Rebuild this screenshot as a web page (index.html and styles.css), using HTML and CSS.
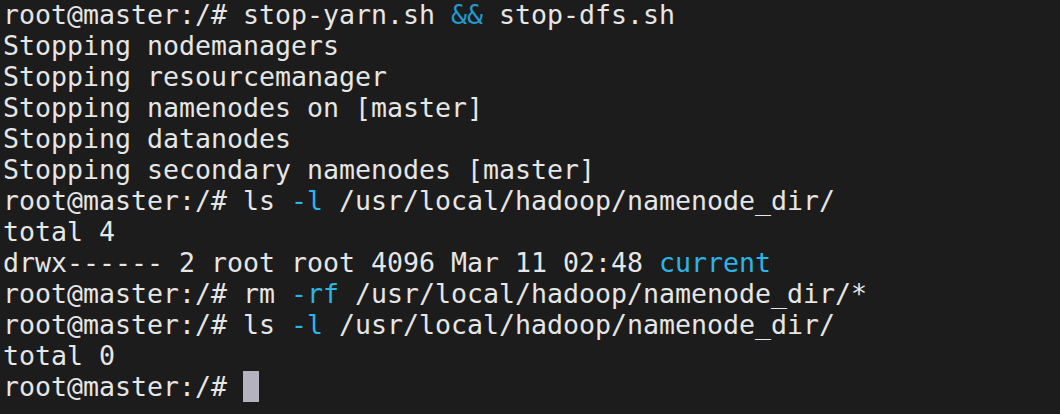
FILE: index.html
```html
<!DOCTYPE html>
<html>
<head>
<meta charset="utf-8">
<link rel="stylesheet" href="styles.css">
</head>
<body>
<pre class="term"><span class="line">root@master:/# stop-yarn.sh <span class="op">&amp;&amp;</span> stop-dfs.sh</span>
<span class="line">Stopping nodemanagers</span>
<span class="line">Stopping resourcemanager</span>
<span class="line">Stopping namenodes on [master]</span>
<span class="line">Stopping datanodes</span>
<span class="line">Stopping secondary namenodes [master]</span>
<span class="line">root@master:/# ls <span class="flag">-l</span> /usr/local/hadoop/namenode_dir/</span>
<span class="line">total 4</span>
<span class="line">drwx------ 2 root root 4096 Mar 11 02:48 <span class="dir">current</span></span>
<span class="line">root@master:/# rm <span class="flag">-rf</span> /usr/local/hadoop/namenode_dir/*</span>
<span class="line">root@master:/# ls <span class="flag">-l</span> /usr/local/hadoop/namenode_dir/</span>
<span class="line">total 0</span>
<span class="line">root@master:/# <span class="cursor"> </span></span></pre>
</body>
</html>
```
FILE: styles.css
```css
html, body {
  margin: 0;
  padding: 0;
  background: #1c1c1c;
  width: 1060px;
  height: 414px;
  overflow: hidden;
}
.term {
  margin: -1px 0 0 0;
  padding: 0 0 0 3px;
  font-family: "DejaVu Sans Mono", monospace;
  font-size: 26.58px;
  line-height: 31px;
  color: #e6e6e6;
  white-space: pre;
}
.line {
  display: inline;
}
.op {
  color: #1f9bd1;
}
.flag, .dir {
  color: #2bb5e6;
}
.cursor {
  display: inline-block;
  width: 16px;
  height: 31px;
  vertical-align: top;
  background: #b3b2bd;
}
```
